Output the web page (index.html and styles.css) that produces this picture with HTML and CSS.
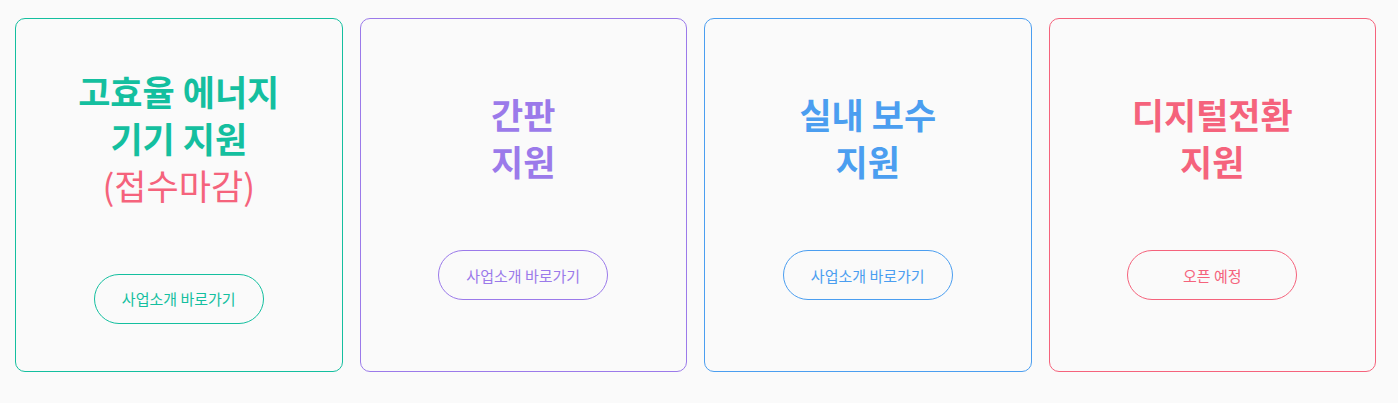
FILE: index.html
```html
<!DOCTYPE html>
<html>
<head>
  <title>사업 안내</title>
  <link rel="stylesheet" href="styles.css">
</head>
<body>
  <div class="cards">
    <div class="card card-green">
      <h2 class="card-title">고효율 에너지<br>기기 지원<br><span class="closed">(접수마감)</span></h2>
      <a class="card-btn" href="#">사업소개 바로가기</a>
    </div>
    <div class="card card-purple">
      <h2 class="card-title">간판<br>지원</h2>
      <a class="card-btn" href="#">사업소개 바로가기</a>
    </div>
    <div class="card card-blue">
      <h2 class="card-title">실내 보수<br>지원</h2>
      <a class="card-btn" href="#">사업소개 바로가기</a>
    </div>
    <div class="card card-pink">
      <h2 class="card-title">디지털전환<br>지원</h2>
      <a class="card-btn" href="#">오픈 예정</a>
    </div>
  </div>
</body>
</html>
```

FILE: styles.css
```css
body {
  margin: 0;
  padding: 0;
  background-color: #fafafa;
  font-family: "Noto Sans CJK KR", "Noto Sans", sans-serif;
}

.cards {
  display: grid;
  grid-template-columns: repeat(4, 1fr);
  gap: 17px;
  width: 1361px;
  padding: 18px 0 31px 15px;
}

.card {
  height: 354px;
  box-sizing: border-box;
  border: 1px solid;
  border-radius: 10px;
  display: flex;
  flex-direction: column;
  align-items: center;
  justify-content: center;
  color: var(--c);
  border-color: var(--c);
}

.card-green { --c: #14bf9f; }
.card-purple { --c: #9b7aea; }
.card-blue { --c: #4b9ef0; }
.card-pink { --c: #f5637c; }

.card-title {
  margin: 0 0 66px;
  font-size: 35px;
  line-height: 47px;
  font-weight: 700;
  text-align: center;
}

.closed {
  color: #f5637c;
  font-weight: 400;
}

.card-btn {
  width: 170px;
  height: 50px;
  box-sizing: border-box;
  border: 1px solid var(--c);
  border-radius: 25px;
  display: flex;
  align-items: center;
  justify-content: center;
  font-size: 15px;
  color: var(--c);
  text-decoration: none;
}
```
